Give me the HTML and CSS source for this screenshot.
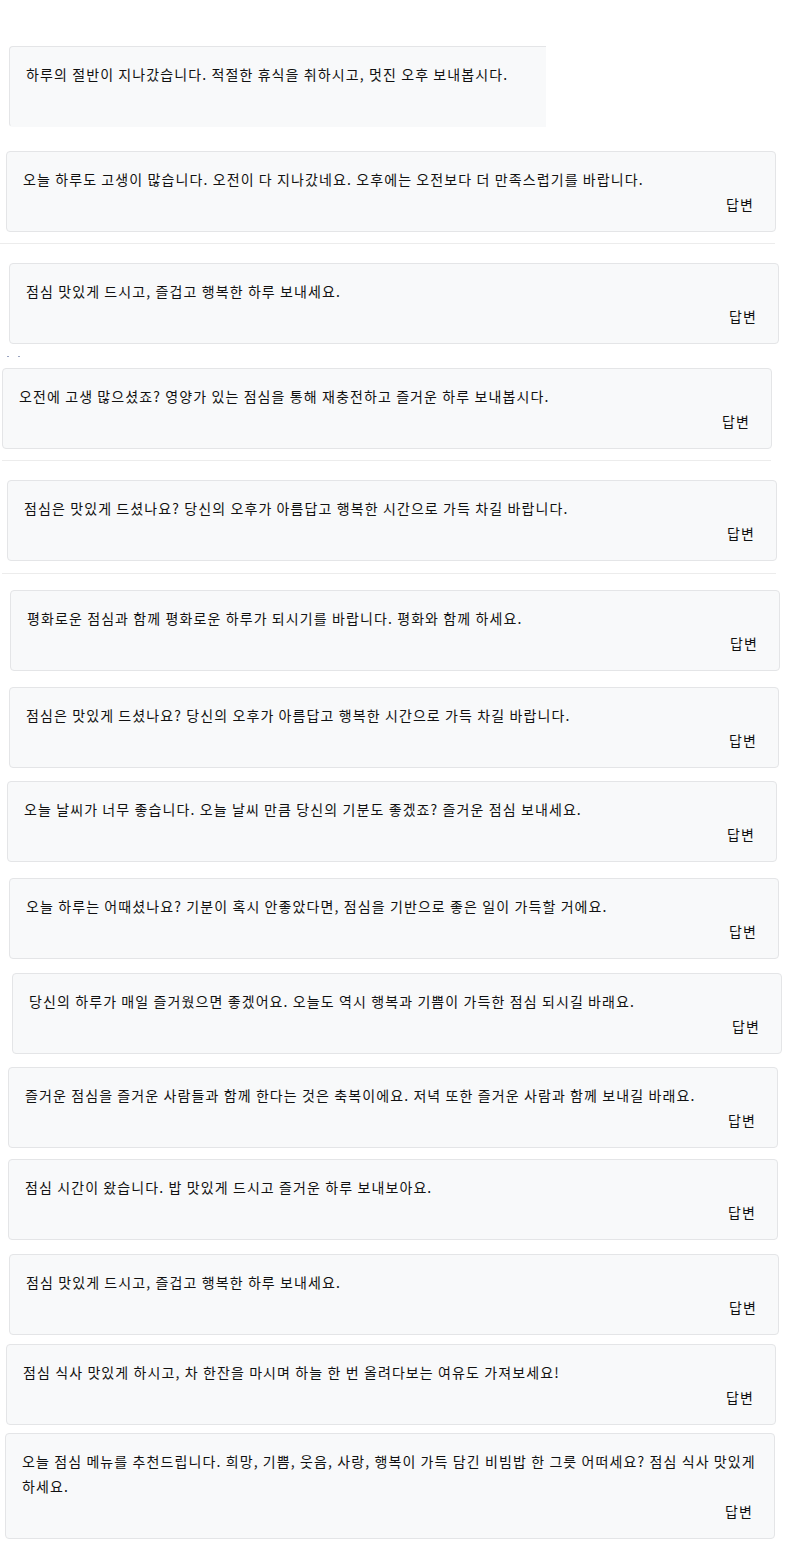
FILE: index.html
```html
<!DOCTYPE html>
<html>
<head>
  <meta charset="utf-8">
  <title>점심 인사</title>
  <link rel="stylesheet" href="styles.css">
</head>
<body>

  <main class="feed">
    <div class="card-clip">
      <div class="card">
        <p class="msg">하루의 절반이 지나갔습니다. 적절한 휴식을 취하시고, 멋진 오후 보내봅시다.</p>
        <div class="answer"></div>
      </div>
    </div>

    <div class="card">
      <p class="msg">오늘 하루도 고생이 많습니다. 오전이 다 지나갔네요. 오후에는 오전보다 더 만족스럽기를 바랍니다.</p>
      <div class="answer">답변</div>
    </div>

    <hr class="sep">

    <div class="card">
      <p class="msg">점심 맛있게 드시고, 즐겁고 행복한 하루 보내세요.</p>
      <div class="answer">답변</div>
    </div>

    <div class="dots"><span></span><span></span></div>

    <div class="card">
      <p class="msg">오전에 고생 많으셨죠? 영양가 있는 점심을 통해 재충전하고 즐거운 하루 보내봅시다.</p>
      <div class="answer">답변</div>
    </div>

    <hr class="sep">

    <div class="card">
      <p class="msg">점심은 맛있게 드셨나요? 당신의 오후가 아름답고 행복한 시간으로 가득 차길 바랍니다.</p>
      <div class="answer">답변</div>
    </div>

    <hr class="sep">

    <div class="card">
      <p class="msg">평화로운 점심과 함께 평화로운 하루가 되시기를 바랍니다. 평화와 함께 하세요.</p>
      <div class="answer">답변</div>
    </div>

    <div class="card">
      <p class="msg">점심은 맛있게 드셨나요? 당신의 오후가 아름답고 행복한 시간으로 가득 차길 바랍니다.</p>
      <div class="answer">답변</div>
    </div>

    <div class="card">
      <p class="msg">오늘 날씨가 너무 좋습니다. 오늘 날씨 만큼 당신의 기분도 좋겠죠? 즐거운 점심 보내세요.</p>
      <div class="answer">답변</div>
    </div>

    <div class="card">
      <p class="msg">오늘 하루는 어때셨나요? 기분이 혹시 안좋았다면, 점심을 기반으로 좋은 일이 가득할 거에요.</p>
      <div class="answer">답변</div>
    </div>

    <div class="card">
      <p class="msg">당신의 하루가 매일 즐거웠으면 좋겠어요. 오늘도 역시 행복과 기쁨이 가득한 점심 되시길 바래요.</p>
      <div class="answer">답변</div>
    </div>

    <div class="card">
      <p class="msg">즐거운 점심을 즐거운 사람들과 함께 한다는 것은 축복이에요. 저녁 또한 즐거운 사람과 함께 보내길 바래요.</p>
      <div class="answer">답변</div>
    </div>

    <div class="card">
      <p class="msg">점심 시간이 왔습니다. 밥 맛있게 드시고 즐거운 하루 보내보아요.</p>
      <div class="answer">답변</div>
    </div>

    <div class="card">
      <p class="msg">점심 맛있게 드시고, 즐겁고 행복한 하루 보내세요.</p>
      <div class="answer">답변</div>
    </div>

    <div class="card">
      <p class="msg">점심 식사 맛있게 하시고, 차 한잔을 마시며 하늘 한 번 올려다보는 여유도 가져보세요!</p>
      <div class="answer">답변</div>
    </div>

    <div class="card">
      <p class="msg">오늘 점심 메뉴를 추천드립니다. 희망, 기쁨, 웃음, 사랑, 행복이 가득 담긴 비빔밥 한 그릇 어떠세요? 점심 식사 맛있게 하세요.</p>
      <div class="answer">답변</div>
    </div>
  </main>

</body>
</html>
```

FILE: styles.css
```css
body {
  margin: 0;
  background: #fff;
  color: #111;
  font-family: 'Noto Sans CJK KR', 'Noto Sans', sans-serif;
  font-size: 14px;
  letter-spacing: 1.1px;
}

.feed {
  padding-bottom: 12px;
}

.card {
  box-sizing: border-box;
  width: 770px;
  padding: 15px 16px 14px;
  background: #f8f9fa;
  border: 1px solid #e4e5e7;
  border-radius: 4px;
}

.msg {
  margin: 0;
  line-height: 25px;
}

.answer {
  height: 25px;
  line-height: 25px;
  text-align: right;
  padding-right: 5px;
}

.card-clip {
  width: 537px;
  overflow: hidden;
}

.card-clip .card {
  border-right: none;
  border-bottom-color: transparent;
  border-radius: 4px 0 0 4px;
}

.sep {
  height: 0;
  margin-bottom: 0;
  border: none;
  border-top: 1px solid #ececec;
}

.dots {
  display: flex;
  gap: 9px;
  height: 2px;
  padding-left: 7px;
}

.dots span {
  width: 2px;
  height: 1px;
  background: #9aa4c0;
}

/* each row sits a little off, as in the capture */
.feed > :nth-child(1)  { margin: 46px 0 0 9px; }
.feed > :nth-child(2)  { margin: 24px 0 0 6px; }
.feed > :nth-child(3)  { margin: 11px 0 0 0; width: 775px; }
.feed > :nth-child(4)  { margin: 19px 0 0 9px; }
.feed > :nth-child(5)  { margin: 12px 0 0 0; }
.feed > :nth-child(6)  { margin: 10px 0 0 2px; }
.feed > :nth-child(7)  { margin: 11px 0 0 2px; width: 769px; }
.feed > :nth-child(8)  { margin: 19px 0 0 7px; }
.feed > :nth-child(9)  { margin: 12px 0 0 2px; width: 774px; }
.feed > :nth-child(10) { margin: 16px 0 0 10px; }
.feed > :nth-child(11) { margin: 16px 0 0 9px; }
.feed > :nth-child(12) { margin: 13px 0 0 7px; }
.feed > :nth-child(13) { margin: 16px 0 0 9px; }
.feed > :nth-child(14) { margin: 14px 0 0 12px; }
.feed > :nth-child(15) { margin: 13px 0 0 8px; }
.feed > :nth-child(16) { margin: 11px 0 0 8px; }
.feed > :nth-child(17) { margin: 14px 0 0 9px; }
.feed > :nth-child(18) { margin: 9px 0 0 6px; }
.feed > :nth-child(19) { margin: 8px 0 0 5px; }
```
